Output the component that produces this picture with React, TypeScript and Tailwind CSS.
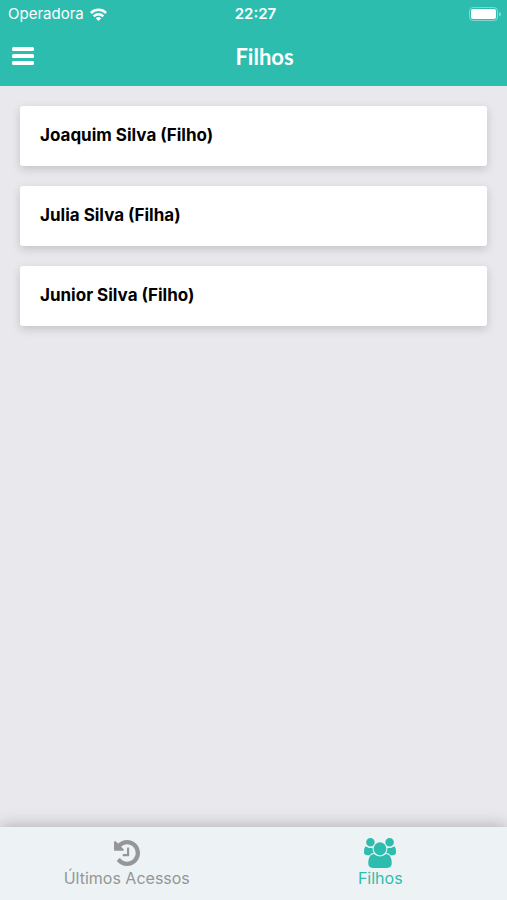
import { useState } from "react"

type IconProps = { className?: string }

const children = [
  { id: 1, name: "Joaquim Silva", relation: "Filho" },
  { id: 2, name: "Julia Silva", relation: "Filha" },
  { id: 3, name: "Junior Silva", relation: "Filho" },
]

const WifiIcon = ({ className }: IconProps) => (
  <svg viewBox="0 0 17 13" className={className} fill="none" stroke="currentColor" strokeWidth="2.5" aria-hidden="true">
    <path d="M.9 5a10.800 10.800 0 0 1 15.200 0" />
    <path d="M3.700 8.300a6.800 6.800 0 0 1 9.600 0" />
    <path d="M8.500 13 5.800 10.300a3.800 3.800 0 0 1 5.400 0z" fill="currentColor" stroke="none" />
  </svg>
)

const BatteryIcon = ({ className }: IconProps) => (
  <svg viewBox="0 0 34 15" className={className} aria-hidden="true">
    <rect x="0.5" y="0.5" width="28" height="13" rx="3.5" fill="none" stroke="currentColor" strokeOpacity="0.4" />
    <rect x="2" y="2" width="25" height="10" rx="2" fill="currentColor" />
    <path d="M30 5v4.400q2-.7 2-2.200T30 5z" fill="currentColor" fillOpacity="0.45" />
  </svg>
)

const BarsIcon = ({ className }: IconProps) => (
  <svg viewBox="0 0 22 18" className={className} fill="currentColor" aria-hidden="true">
    <rect y="0" width="22" height="4" rx="1.5" />
    <rect y="7" width="22" height="4" rx="1.5" />
    <rect y="14" width="22" height="4" rx="1.5" />
  </svg>
)

const HistoryIcon = ({ className }: IconProps) => (
  <svg viewBox="0 128 1536 1536" className={className} fill="currentColor" aria-hidden="true">
    <path d="M1536 896q0 156-61 298t-164 245-245 164-298 61q-172 0-327-72.5t-264-204.5q-7-10-6.500-22.500t8.500-20.500l137-138q10-9 25-9 16 2 23 12 73 95 179 147t225 52q104 0 198.500-40.500t163.500-109.500 109.500-163.500 40.500-198.500-40.500-198.500-109.500-163.500-163.500-109.500-198.500-40.500q-98 0-188 35.500t-160 101.500l137 138q31 30 14 69-17 40-59 40h-448q-26 0-45-19t-19-45v-448q0-42 40-59 39-17 69 14l130 129q107-101 244.500-156.500t284.500-55.500q156 0 298 61t245 164 164 245 61 298zm-640-288v448q0 14-9 23t-23 9h-320q-14 0-23-9t-9-23v-64q0-14 9-23t23-9h224v-352q0-14 9-23t23-9h64q14 0 23 9t9 23z" />
  </svg>
)

const UsersIcon = ({ className }: IconProps) => (
  <svg viewBox="0 0 1920 1792" className={className} fill="currentColor" aria-hidden="true">
    <path d="M593 896q-162 5-265 128h-134q-82 0-138-40.500t-56-118.500q0-353 124-353 6 0 43.500 21t97.500 42.500 119 21.500q67 0 133-23-5 37-5 66 0 139 81 256zm1071 637q0 120-73 189.500t-194 69.500h-874q-121 0-194-69.500t-73-189.500q0-53 3.500-103.500t14-109 26.500-108.500 43-97.500 62-81 85.500-53.500 111.500-20q10 0 43 21.500t73 48 107 48 135 21.500 135-21.500 107-48 73-48 43-21.500q61 0 111.500 20t85.500 53.500 62 81 43 97.500 26.500 108.500 14 109 3.500 103.500zm-1024-1277q0 106-75 181t-181 75-181-75-75-181 75-181 181-75 181 75 75 181zm704 384q0 159-112.500 271.500t-271.500 112.500-271.500-112.500-112.500-271.500 112.500-271.500 271.500-112.500 271.500 112.500 112.500 271.500zm576 225q0 78-56 118.500t-138 40.500h-134q-103-123-265-128 81-117 81-256 0-29-5-66 66 23 133 23 59 0 119-21.500t97.500-42.500 43.500-21q124 0 124 353zm-128-609q0 106-75 181t-181 75-181-75-75-181 75-181 181-75 181 75 75 181z" />
  </svg>
)

export default function App() {
  const [tab, setTab] = useState("filhos")

  return (
    <div className="flex min-h-screen flex-col bg-[#e8e8ed] font-['Inter',sans-serif]">
      <header className="bg-[#2dbdaf] text-white">
        {/* Status bar */}
        <div className="grid h-7 grid-cols-3 items-center pl-2 pr-1 text-[15px]">
          <div className="flex items-center gap-1.5">
            <span>Operadora</span>
            <WifiIcon className="h-[13px] w-[17px]" />
          </div>
          <span className="text-center font-semibold">22:27</span>
          <BatteryIcon className="h-[15px] w-[34px] justify-self-end" />
        </div>

        {/* Title bar */}
        <div className="flex h-[58px] items-center px-3 pb-0.5">
          <button type="button" aria-label="Menu">
            <BarsIcon className="h-[18px] w-[22px]" />
          </button>
          <h1 className="flex-1 text-center font-['Lato',sans-serif] text-[22px] font-bold">Filhos</h1>
        </div>
      </header>

      <main className="flex-1 p-5">
        <ul className="space-y-5">
          {children.map((child) => (
            <li key={child.id}>
              <button
                type="button"
                className="block h-[60px] w-full rounded-[3px] bg-white px-5 text-left text-[17px] font-bold text-black shadow-[0_3px_10px_rgba(0,0,0,0.16)]"
              >
                {child.name} ({child.relation})
              </button>
            </li>
          ))}
        </ul>
      </main>

      {/* Bottom tabs */}
      <nav className="grid h-[73px] grid-cols-2 bg-[#edf2f5] text-base leading-5 shadow-[0_0_16px_rgba(0,0,0,0.28)]">
        <button
          type="button"
          onClick={() => setTab("acessos")}
          className={`flex flex-col items-center justify-end pb-3 ${tab === "acessos" ? "text-[#2dbdaf]" : "text-[#949697]"}`}
        >
          <span className="flex h-[30px] items-center">
            <HistoryIcon className="size-[26px]" />
          </span>
          <span>Últimos Acessos</span>
        </button>
        <button
          type="button"
          onClick={() => setTab("filhos")}
          className={`flex flex-col items-center justify-end pb-3 ${tab === "filhos" ? "text-[#2dbdaf]" : "text-[#949697]"}`}
        >
          <span className="flex h-[30px] items-center">
            <UsersIcon className="h-[30px] w-8" />
          </span>
          <span>Filhos</span>
        </button>
      </nav>
    </div>
  )
}
